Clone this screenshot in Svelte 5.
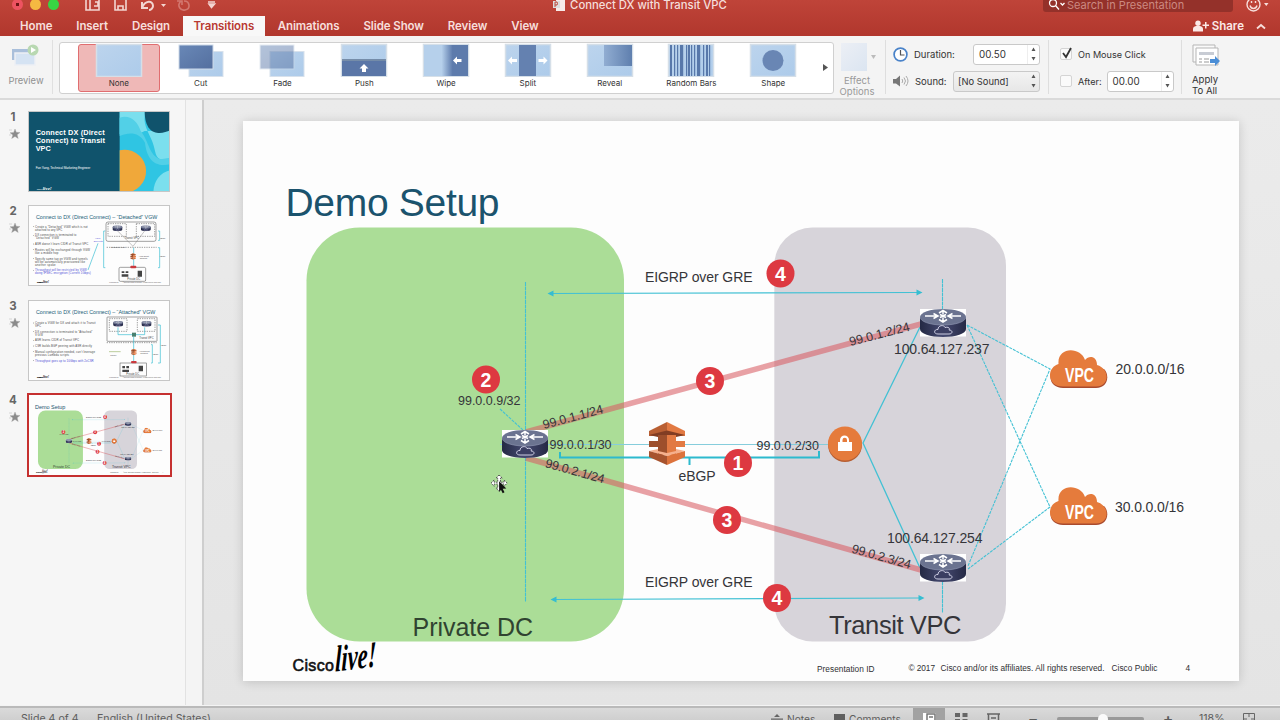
<script lang="ts">
  type Effect = { name: string; kind: string };

  const tabs = ["Home", "Insert", "Design", "Transitions", "Animations", "Slide Show", "Review", "View"];

  const effects: Effect[] = [
    { name: "None", kind: "none" },
    { name: "Cut", kind: "cut" },
    { name: "Fade", kind: "fade" },
    { name: "Push", kind: "push" },
    { name: "Wipe", kind: "wipe" },
    { name: "Split", kind: "split" },
    { name: "Reveal", kind: "reveal" },
    { name: "Random Bars", kind: "bars" },
    { name: "Shape", kind: "shape" },
  ];

  const bars = [2, 6, 9, 12, 14, 18, 20, 23, 26, 29, 31, 35, 38, 41];

  const routers = [
    { x: 502, y: 430 },
    { x: 920, y: 309 },
    { x: 920, y: 554 },
  ];

  const badges = [
    { n: 4, x: 780.5, y: 273.5 },
    { n: 3, x: 710, y: 381 },
    { n: 2, x: 486, y: 379.5 },
    { n: 1, x: 738, y: 463 },
    { n: 3, x: 727, y: 520 },
    { n: 4, x: 777, y: 598 },
  ];

  const detached = [
    { y: 68, text: "Create a “Detached” VGW which is not", w: 158 },
    { y: 77, text: "attached to any VPC", w: 82 },
    { y: 94, text: "DX connection is terminated to", w: 124 },
    { y: 103, text: "“Detached” VGW", w: 72 },
    { y: 120, text: "ASR doesn’t learn CIDR of Transit VPC", w: 160 },
    { y: 137, text: "Routes will be exchanged through VGW", w: 165 },
    { y: 146, text: "like a middle hop", w: 70 },
    { y: 164, text: "Specify same tag on VGW and tunnels", w: 158 },
    { y: 173, text: "will be automatically provisioned like", w: 150 },
    { y: 182, text: "another spoke", w: 62 },
    { y: 199, text: "Throughput will be restricted by VGW", w: 155, blue: true },
    { y: 208, text: "doing IPSEC encryption (Current 1Gbps)", w: 167, blue: true },
  ];

  const attached = [
    { y: 72, text: "Create a VGW for DX and attach it to Transit", w: 182 },
    { y: 81, text: "VPC", w: 18 },
    { y: 98, text: "DX connection is terminated to “Attached”", w: 172 },
    { y: 107, text: "VGW", w: 24 },
    { y: 124, text: "ASR learns CIDR of Transit VPC", w: 132 },
    { y: 141, text: "CSR builds BGP peering with ASR directly", w: 171 },
    { y: 158, text: "Manual configuration needed, can’t leverage", w: 180 },
    { y: 167, text: "previous Lambda scripts", w: 102 },
    { y: 185, text: "Throughput goes up to 10Gbps with 2xCSR", w: 176, blue: true },
  ];
</script>

{#snippet stepper()}
  <span class="stepper">
    <svg width="7" height="16" viewBox="0 0 7 16" fill="#555"><path d="M1.500 5 3.500 1.500 5.500 5zM1.500 11h4l-2 3.500z" /></svg>
  </span>
{/snippet}

{#snippet setupSlide()}
  <svg class="slide-art" viewBox="243 121 996 560" font-family="'Liberation Sans', Arial, sans-serif" fill="#353539">
    <rect x="243" y="121" width="996" height="560" fill="#fdfdfd" />
    <text x="285.500" y="215.500" font-size="39" textLength="214" fill="#1b536d">Demo Setup</text>
    <rect x="306.500" y="227.500" width="317.500" height="414" rx="53" fill="#abdd97" />
    <rect x="774.300" y="227.500" width="231.700" height="414" rx="38" fill="#d7d4da" />

    <g fill="none" stroke="#43c1d4" stroke-width="1.100">
      <path d="M525.500 282v320M942.500 279v31M942.500 581v32" stroke-dasharray="4 .5" />
      <path d="M500 409 524 431" stroke-dasharray="3 1" />
      <path d="M552 293.500 917 292.500M555 599.500 919 598" />
      <path d="M500 444.500H830" stroke="#86cddc" />
      <path d="M920 327 863 443 920 568" stroke-width="1.300" />
      <path d="M967 325 1050 369 968 566M967 325 1050 507 968 569" stroke-dasharray="3 1" />
      <path d="M560 452v5.500H819V451M689.500 457.500V465" stroke="#2dbace" stroke-width="2" />
    </g>
    <g fill="#35bdd1">
      <path d="M547.500 293.500l6-3v6zM922.500 292.500l-6-3v6zM550.500 599.500l6-3v6zM924.500 598l-6-3v6z" />
    </g>
    <g stroke="#d95c63" stroke-opacity=".57" stroke-width="5.500">
      <path d="M526 432 921 324M526 458 921 570" fill="none" />
    </g>

    <use href="#direct-connect" x="648" y="422" width="38" height="43" />
    {#each routers as r}
      <use href="#router" x={r.x} y={r.y} width="46" height="28" />
    {/each}
    <use href="#vpc-cloud" x="1050" y="350" width="59" height="38" />
    <use href="#vpc-cloud" x="1050" y="487" width="59" height="38" />

    <circle cx="845" cy="445" r="17" fill="#b65e32" />
    <circle cx="845" cy="443.500" r="17" fill="#e57b3c" />
    <path d="M838 442h14v9h-14zM840 443v-3a4.500 4.500 0 0 1 9 0v3" fill="#fff" />
    <path d="M842.500 442v-2a2 2 0 0 1 4.500 0v2z" fill="#e57b3c" />

    <g font-size="14">
      <text x="645" y="281.500" textLength="107.500">EIGRP over GRE</text>
      <text x="645" y="587" textLength="107.500">EIGRP over GRE</text>
      <text x="894" y="353.500" textLength="95.500">100.64.127.237</text>
      <text x="887" y="543" textLength="95.500">100.64.127.254</text>
      <text x="1115.500" y="374" textLength="69">20.0.0.0/16</text>
      <text x="1115" y="512" textLength="69">30.0.0.0/16</text>
      <text x="678.500" y="480.500" textLength="37">eBGP</text>
    </g>
    <g font-size="12.500">
      <text x="458" y="404.500" textLength="62.500">99.0.0.9/32</text>
      <text x="549.500" y="449" textLength="62">99.0.0.1/30</text>
      <text x="756.500" y="449.500" textLength="62.500">99.0.0.2/30</text>
      <text transform="translate(544 429) rotate(-15)" textLength="62">99.0.1.1/24</text>
      <text transform="translate(544.500 467) rotate(15.500)" textLength="61">99.0.2.1/24</text>
      <text transform="translate(850.500 346) rotate(-14.500)" textLength="62">99.0.1.2/24</text>
      <text transform="translate(851 552.500) rotate(15.500)" textLength="61">99.0.2.3/24</text>
    </g>

    {#each badges as b}
      <circle cx={b.x} cy={b.y} r="14" fill="#dd3941" />
      <text x={b.x} y={b.y + 7} text-anchor="middle" font-size="19.500" font-weight="bold" fill="#fff">{b.n}</text>
    {/each}

    <text x="412.500" y="635.500" font-size="25" textLength="120.500" fill="#304331">Private DC</text>
    <text x="829" y="633.500" font-size="25.500" textLength="132.500">Transit VPC</text>

    <text class="cisco" x="292.500" y="671" font-size="16" textLength="41.500">Cisco</text>
    <text class="live" transform="translate(335 671.500) rotate(-7) skewX(-8) scale(.74 1.050)" font-size="35" textLength="56" lengthAdjust="spacingAndGlyphs">live!</text>
    <g font-size="8.300" fill="#303033">
      <text x="817" y="672" textLength="57.500">Presentation ID</text>
      <text x="908.500" y="671" textLength="26.500">© 2017</text>
      <text x="940.500" y="671" textLength="164">Cisco and/or its affiliates. All rights reserved.</text>
      <text x="1111.500" y="671" textLength="46">Cisco Public</text>
      <text x="1185.500" y="671">4</text>
    </g>
  </svg>
{/snippet}

{#snippet bullets(lines: { y: number; text: string; w: number; blue?: boolean }[])}
  <g font-size="8.500">
    {#each lines as line, i}
      {#if i === 0 || line.y - lines[i - 1].y > 12}
        <circle cx="17" cy={line.y - 3} r="1.200" />
      {/if}
      <text x="21" y={line.y} textLength={line.w} fill={line.blue ? "#4a4ad4" : "#4a4a4a"}>{line.text}</text>
    {/each}
  </g>
{/snippet}

{#snippet thumbFooter()}
  <text x="27" y="234" class="cisco" font-size="7">Cisco</text>
  <text x="45" y="234" class="live" font-size="15" textLength="18" lengthAdjust="spacingAndGlyphs">live!</text>
  <text x="244" y="233" font-size="4">Presentation ID</text>
  <text x="284" y="233" font-size="4">© 2017 Cisco and/or its affiliates. All rights reserved. Cisco Public</text>
{/snippet}

<svg width="0" height="0" class="defs" aria-hidden="true">
  <defs>
    <linearGradient id="router-side">
      <stop offset="0" stop-color="#242944" />
      <stop offset=".5" stop-color="#464a71" />
      <stop offset="1" stop-color="#252945" />
    </linearGradient>
    <linearGradient id="frame-blue" x2="1" y2="1">
      <stop offset="0" stop-color="#bcd4ed" />
      <stop offset="1" stop-color="#adcbea" />
    </linearGradient>
    <linearGradient id="frame-dark" x2="1" y2="1">
      <stop offset="0" stop-color="#6988b7" />
      <stop offset="1" stop-color="#546f9f" />
    </linearGradient>
    <linearGradient id="wipe-fill">
      <stop offset=".4" stop-color="#b6d0eb" />
      <stop offset=".65" stop-color="#5d7bac" />
    </linearGradient>
    <linearGradient id="reveal-fill">
      <stop offset="0" stop-color="#91add2" />
      <stop offset="1" stop-color="#5f7fae" />
    </linearGradient>
    <symbol id="router" viewBox="0 0 46 28">
      <path fill="#fff" d="M0 0h46v27.500H0z" />
      <path fill="url(#router-side)" d="M0 8v12c0 4.500 10 8 23 8s23-3.500 23-8V8z" />
      <ellipse cx="23" cy="8" rx="23" ry="8" fill="#6b7390" />
      <path d="M0 8c0 4.500 10 8 23 8s23-3.500 23-8" fill="none" stroke="#8a90ac" stroke-width=".7" />
      <g fill="none" stroke="#fff" stroke-width="1.500">
        <path d="M5 7h12M13.500 4.500 18 7l-4.500 2.500M41 7H29M32.500 4.500 28 7l4.500 2.500M23 5.500V2M19 4l4-2.500L27 4M23 8.500V12M19 10.500l4 2.500 4-2.500M20 5.500l6 3M26 5.500l-6 3" />
      </g>
      <path d="M18 25c-5 0-4-5 0-4.500 0-4.500 6-5 7-2 4-1 5 1 4 2.500 4 0 4 4 0 4z" fill="#3b3e62" stroke="#dcdcef" stroke-width=".9" />
    </symbol>
    <symbol id="direct-connect" viewBox="0 0 38 43">
      <path fill="#b95f33" d="M1 9 19 0v14L1 14z" />
      <path fill="#e27a43" d="m37 9-18-9v14h18z" />
      <path fill="#813d23" d="M1 13 19 8.500 37 13l-9 2H10z" />
      <path fill="#9d4f2c" d="M10 13h9v20h-9v-8H1v-6h9z" />
      <path fill="#e27a43" d="M28 13h-9v20h9v-8h9v-6h-9z" />
      <path fill="#f6b08d" d="m1 29 18-4 18 4-18 5z" />
      <path fill="#9d4f2c" d="M10 24h9v7l-9-2z" />
      <path fill="#e27a43" d="M28 24h-9v7l9-2z" />
      <path fill="#a7532e" d="m1 29 18 5v9L1 35z" />
      <path fill="#dd733c" d="m37 29-18 5v9l18-8z" />
    </symbol>
    <symbol id="vpc-cloud" viewBox="0 0 59 38">
      <path fill="#a94b2e" d="M13 38h33c12 0 14-13 8-19H5c-8 6-5 19 8 19z" />
      <path fill="#e57b3c" d="M13 36.500h33c14 0 14-18 1-21.500C47 6 39 5 35 10 31-3.500 7-4 8.500 14-4 18-3 36.500 13 36.500z" />
      <text x="15" y="31.500" font-family="'Liberation Sans', Arial, sans-serif" font-size="20" font-weight="bold" fill="#fff" textLength="29" lengthAdjust="spacingAndGlyphs">VPC</text>
    </symbol>
  </defs>
</svg>

<div class="window">
  <header>
    <div class="titlebar">
      <div class="title-left">
        <i class="light close"></i><i class="light minimize"></i><i class="light expand"></i>
        <svg class="quick" width="132" height="18" viewBox="84 -5 132 18" fill="none" stroke="#f3d5d1" stroke-width="1.600">
          <path d="M85 -3H98V9H85zM89 -3V9M94 1h3v4h-4M114 -3h9l2 2V9h-11zM117 9V5h5v4" />
          <path d="M141 1v6h6M141 7c3-8 11-8 11-2 0 2-2 4-4 4" stroke-width="2" />
          <path d="M160 3h5l-2.500 3z" fill="#f3d5d1" stroke="none" />
          <path d="M180 0c-5 5 0 10 4 9 6-1 5-9-1-9M181 4v-4h-5" stroke="#d3776f" />
          <path d="M207 1h7M208 3h5.500l-3 3.500z" fill="#f3d5d1" />
        </svg>
      </div>
      <div class="title">
        <svg width="13" height="14" viewBox="0 0 13 14"><path fill="#f8ebe9" d="M3 1h9v12H3z" /><path fill="#ddd" d="M0 3h7v7H0z" /><path d="M2 9V4h2q1 1.500 0 3H2" fill="none" stroke="#bc463b" /></svg>
        <span>Connect DX with Transit VPC</span>
      </div>
      <div class="title-right">
        <div class="search">
          <svg width="18" height="12" viewBox="0 0 18 12" fill="none" stroke="#fff" stroke-width="1.300"><circle cx="5" cy="4" r="3.500" /><path d="m7.500 6.500 3.500 4M12.500 4l2 2 2-2" /></svg>
          <span>Search in Presentation</span>
        </div>
        <svg width="23" height="16" viewBox="0 0 23 16" fill="none" stroke="#f7dedb" stroke-width="1.400"><circle cx="7.500" cy="7.500" r="6.500" /><path d="M4 8.500c1 4 6 4 7 0M5.500 4v2M9.500 4v2" /><path d="M18 6h4.500l-2.200 3z" fill="#f7dedb" stroke="none" /></svg>
      </div>
    </div>
    <nav>
      {#each tabs as tab}
        <button type="button" class:active={tab === "Transitions"}>{tab}</button>
      {/each}
      <div class="share">
        <svg width="16" height="12" viewBox="0 0 16 12" fill="#fbe9e7"><circle cx="5" cy="3.200" r="2.700" /><path d="M0 11.500V9q0-2.500 3-3h4q3 .5 3 3v2.500zM12 2h1.500v2.500H16V6h-2.500v2.500H12V6H9.500V4.500H12z" /></svg>
        <strong>Share</strong>
        <svg width="10" height="7" viewBox="0 0 10 7" fill="none" stroke="#f7dedb" stroke-width="1.800"><path d="m1 5.500 4-3.500 4 3.500" /></svg>
      </div>
    </nav>
  </header>

  <section class="ribbon">
    <div class="preview">
      <svg width="30" height="26" viewBox="0 0 30 26"><path fill="#a9bfdb" d="M1 6h17v11H1z" /><path fill="#d5e3f3" stroke="#edf0f5" stroke-width="1.500" d="M4 10h20v12H4z" /><circle cx="22" cy="7" r="5.500" fill="#b8d8b1" /><path fill="#fff" d="m20 4 5 3-5 3z" /></svg>
      <span>Preview</span>
    </div>

    <div class="gallery">
      {#each effects as effect}
        <div class="effect" class:selected={effect.kind === "none"}>
          <svg width="48" height="34" viewBox="-1 -1 48 34">
            {#if effect.kind === "cut" || effect.kind === "fade"}
              <rect x="11" y="7.500" width="34" height="25" fill="url(#frame-blue)" stroke="#d7e1ec" />
              <rect x="1" y="1" width="34" height="24" fill="url(#frame-dark)" stroke="#cdd9e8" opacity={effect.kind === "fade" ? 0.5 : 1} />
            {:else}
              <rect x=".5" y=".5" width="45" height="32" fill="url(#frame-blue)" stroke="#d5dfe8" stroke-width="1.500" />
            {/if}
            {#if effect.kind === "push"}
              <path d="M1 17h44v15H1z" fill="#5a76a7" /><path d="M1 16h44" stroke="#354866" />
              <path d="m23 20 4.500 4.500H25V28h-4v-3.500h-2.500z" fill="#fff" />
            {:else if effect.kind === "wipe"}
              <path d="M1 1h44v31H1z" fill="url(#wipe-fill)" />
              <path d="m30 16.500 4-4V15h4.500v3H34v2.500z" fill="#fff" />
            {:else if effect.kind === "split"}
              <path d="M14 1h17v31H14z" fill="#6481b0" />
              <path d="m3 16.500 4-4V15h5v3H7v2.500zM42.500 16.500l-4-4V15h-5v3h5v2.500z" fill="#fff" />
            {:else if effect.kind === "reveal"}
              <path d="M17 1h28v21H17z" fill="url(#reveal-fill)" />
            {:else if effect.kind === "bars"}
              {#each bars as x, i}
                <rect {x} y="1" width={i % 3 === 0 ? 2 : 1.2} height="31" fill="#5878aa" />
              {/each}
            {:else if effect.kind === "shape"}
              <circle cx="23" cy="16.500" r="10.500" fill="#6986b4" />
            {/if}
          </svg>
          <span>{effect.name}</span>
        </div>
      {/each}
      <svg class="more" width="7" height="9" viewBox="0 0 7 9"><path d="M1 1v7l5-3.500z" fill="#555" /></svg>
    </div>

    <div class="effect-options">
      <div><i></i><svg width="6" height="4"><path d="M0 0h5L2.500 4z" fill="#bbb" /></svg></div>
      <span>Effect<br />Options</span>
    </div>

    <div class="group timing">
      <div class="row">
        <svg width="15" height="15" viewBox="0 0 15 15" fill="none" stroke="#4a83c9" stroke-width="1.700"><circle cx="7.500" cy="7.500" r="6.400" fill="#fff" /><path d="M7.500 3v5h4" stroke="#555" stroke-width="1.200" /></svg>
        <span class="duration-label">Duration:</span>
        <div class="field duration">00.50{@render stepper()}</div>
      </div>
      <div class="row">
        <svg width="16" height="12" viewBox="0 0 16 12"><path d="M0 4h3l4-3.500v11L3 8.500H0z" fill="#777" /><path d="M9 4q1.500 2 0 4M11 2.500q3 3.500 0 7M13 1q4 5 0 10" fill="none" stroke="#aaa" /></svg>
        <span class="sound-label">Sound:</span>
        <div class="field sound">[No Sound]{@render stepper()}</div>
      </div>
    </div>

    <div class="group advance">
      <div class="row">
        <i class="box"><svg width="13" height="14" viewBox="0 0 13 14"><path d="m3 7 3 4 5-9" fill="none" stroke="#333" stroke-width="1.800" /></svg></i>
        <span>On Mouse Click</span>
      </div>
      <div class="row">
        <i class="box"></i>
        <span>After:</span>
        <div class="field after">00.00{@render stepper()}</div>
      </div>
    </div>

    <div class="group apply">
      <svg width="28" height="23" viewBox="0 0 28 23"><path d="M1 1h22v17H1z" fill="#fafafa" stroke="#b5b5b5" /><path d="M4 4h22v17H4z" fill="#fff" stroke="#b5b5b5" /><path d="M7 8h15v3H7z" fill="#c8ccd4" /><path d="M7 15h3m2 0h5M7 18h3m2 0h5" stroke="#999" /><path d="M18 15h5v-3l5 5-5 5v-3h-5z" fill="#4b8ed6" /></svg>
      <span>Apply<br />To All</span>
    </div>
  </section>

  <main>
    <aside>
      {#each [1, 2, 3, 4] as n}
        <div class="thumb-row">
          <div class="marker">
            <b>{n}</b>
            <svg width="11" height="10" viewBox="0 0 11 10"><path d="m6 0 1.300 3.300L11 3.500 8.200 5.800 9.200 9.500 6 7.500 2.700 9.500 3.800 6 1 3.700l3.700-.3zM0 1h3M0 6h2" fill="#8b8b8b" stroke="#aaa" stroke-width=".4" /></svg>
          </div>
          <div class="thumb" class:current={n === 4}>
            {#if n === 1}
              <svg class="cover" viewBox="0 0 426 243" font-family="'Liberation Sans', Arial, sans-serif" fill="#fff">
                <path fill="#10536c" d="M0 0h426v243H0z" />
                <path fill="#2fc5e3" d="M275 0h151v243H275z" />
                <path fill="#7bdfee" d="M275 0h78c-14 50 20 70 28 120 8 40 35 20 45 30V60H350L330 70Q310 55 275 70z" />
                <path fill="#52d0e7" d="M275 20c30-10 53 10 63 40 25 30 25 75 60 85l28-5v20c-50 10-70-20-75-65-20-35-50-30-76-20z" />
                <path fill="#7bdfee" d="M426 178c-30 8-48 30-50 65h50z" />
                <path fill="#10536c" d="M350 0c0 80 53 70 76 58V0z" />
                <path fill="#f0a83a" d="M275 118a60 60 0 0 1 30 125h-30z" />
                <g font-size="22" font-weight="bold">
                  <text x="23" y="71" textLength="207">Connect DX (Direct</text>
                  <text x="23" y="95" textLength="208">Connect) to Transit</text>
                  <text x="23" y="120">VPC</text>
                </g>
                <text x="23" y="174" font-size="9.500" textLength="164">Fan Yang, Technical Marketing Engineer</text>
                <text x="26" y="236" class="cisco" font-size="7">Cisco</text>
                <text x="44" y="236" class="live" font-size="15">live!</text>
              </svg>
            {:else if n === 2}
              <svg viewBox="0 0 426 243" font-family="'Liberation Sans', Arial, sans-serif" fill="#444">
                <text x="24" y="43" font-size="16" textLength="364" fill="#226078">Connect to DX (Direct Connect) – “Detached” VGW</text>
                {@render bullets(detached)}
                <g fill="none" stroke="#444" stroke-width="1.500">
                  <rect x="234" y="51" width="150" height="58" rx="6" />
                  <path d="M240 56h55v38h-55zM325 56h55v38h-55zM236 127h150" stroke-dasharray="4 3" />
                  <path d="M266 75 315 124 352 75" stroke="#888" />
                  <rect x="273" y="187" width="80" height="42" rx="4" />
                </g>
                <g fill="none" stroke="#35bdd1" stroke-width="2"><path d="M232 78h-5v110h5M390 78h5v28h-5M390 128h5v60h-5M317 128v58M180 195 210 115" /></g>
                <use href="#router" x="253" y="61" width="31" height="18" />
                <use href="#router" x="338" y="61" width="31" height="18" />
                <rect x="307" y="182" width="18" height="8" rx="3" fill="#c93a3f" />
                <use href="#direct-connect" x="306" y="144" width="19" height="20" />
                <path d="M281 199h8v5h-8zM293 199h8v5h-8zM281 208h20v7h-20zM329 197h13v18h-13z" fill="#444" />
                <g font-size="6">
                  <text x="290" y="102" font-size="8">Transit VPC</text>
                  <text x="298" y="226" font-size="8">Private DC</text>
                  <text x="250" y="130">Detached VGW</text>
                  <text x="332" y="155">AWS Direct</text>
                  <text x="335" y="162">Connect</text>
                  <text x="396" y="103">eBGP</text>
                  <text x="396" y="157">eBGP</text>
                  <text x="201" y="103" font-size="7" fill="#5555d8">VGW</text>
                  <text x="197" y="112" font-size="7" fill="#5555d8">Encrypts</text>
                </g>
                {@render thumbFooter()}
              </svg>
            {:else if n === 3}
              <svg viewBox="0 0 426 243" font-family="'Liberation Sans', Arial, sans-serif" fill="#444">
                <text x="24" y="43" font-size="16" textLength="358" fill="#226078">Connect to DX (Direct Connect) – “Attached” VGW</text>
                {@render bullets(attached)}
                <g fill="none" stroke="#444" stroke-width="1.500">
                  <rect x="237" y="51" width="150" height="73" rx="2" />
                  <path d="M244 56h53v38h-53zM328 56h53v38h-53zM236 128h150" stroke-dasharray="4 3" />
                  <rect x="276" y="189" width="79" height="39" />
                </g>
                <g fill="none" stroke="#35bdd1" stroke-width="2"><path d="M270 82v22h80V82M390 75h7v114h-7M369 134h4v55h-4M317 110v74" /><path d="M243 155h35" stroke="#9ab56d" /></g>
                <use href="#router" x="255" y="62" width="31" height="18" />
                <use href="#router" x="340" y="62" width="31" height="18" />
                <rect x="309" y="183" width="17" height="7" rx="3" fill="#c93a3f" />
                <use href="#direct-connect" x="308" y="146" width="19" height="20" />
                <path d="M312 98h12v12h-12z" fill="#48806f" />
                <path d="M283 198h8v7h-8zM295 198h8v7h-8zM283 209h20v7h-20zM332 197h13v17h-13z" fill="#444" />
                <g font-size="6">
                  <text x="334" y="118" font-size="8">Transit VPC</text>
                  <text x="295" y="226" font-size="8">Private DC</text>
                  <text x="334" y="155">AWS Direct</text>
                  <text x="337" y="162">Connect</text>
                  <text x="399" y="137">eBGP</text>
                  <text x="375" y="165">eBGP</text>
                  <text x="247" y="167">Tunnel</text>
                </g>
                {@render thumbFooter()}
              </svg>
            {:else}
              {@render setupSlide()}
            {/if}
          </div>
        </div>
      {/each}
    </aside>
    <div class="splitter"></div>
    <div class="workspace">
      <div class="slide">
        {@render setupSlide()}
        <svg class="pointer" width="18" height="20" viewBox="0 0 20 22">
          <path d="m9 1 3.500 3.500h-2V9h4V6.500L18 10l-3.500 3.500V11h-4v4.500h2L9 19l-3.500-3.500h2V11h-4v2.500L0 10l3.500-3.500V9h4V4.500h-2z" fill="#fff" stroke="#444" stroke-width="1" stroke-dasharray="2 1" />
          <path d="m9 8 8 8-4 .3 2 4-2 1-2-4-2 2.500z" fill="#111" />
        </svg>
      </div>
    </div>
  </main>

  <footer>
    <div class="status">
      <span class="count">Slide 4 of 4</span>
      <span class="language">English (United States)</span>
      <div class="tools">
        <svg width="12" height="12" viewBox="0 0 12 12" fill="#666"><path d="m6 1 3 3H3zM0 5.500h12v1.300H0zM0 8.500h12v1.300H0z" /></svg>
        <span class="notes">Notes</span>
        <svg width="12" height="10"><path d="M0 0h11v9H0z" fill="#5f5f5f" /></svg>
        <span class="comments">Comments</span>
        <i class="view on"><svg width="13" height="12" viewBox="0 0 13 12"><path d="M0 0h13v12H0z" fill="#fff" /><path d="M4 1h8v8H4zM6 4h4" fill="none" stroke="#777" stroke-width="1.500" /></svg></i>
        <i class="view"><svg width="13" height="12" fill="#666"><path d="M0 0h5v4H0zM7.500 0h5v4h-5zM0 6h5v4H0zM7.500 6h5v4h-5z" /></svg></i>
        <i class="view"><svg width="13" height="12" fill="none" stroke="#666" stroke-width="1.500"><path d="M0 1h13M1.500 1v9h10V1M4 5h5" /></svg></i>
        <span class="sign">−</span>
        <div class="slider"><i></i></div>
        <span class="sign">+</span>
        <span class="percent">118%</span>
        <svg width="12" height="12" viewBox="0 0 12 12" fill="none" stroke="#666"><path d="M.5.500h11v11H.5zM6 1v3M6 8v3M1 6h3M8 6h3" /></svg>
      </div>
    </div>
  </footer>
</div>

<style>
  :global(body) {
    margin: 0;
    overflow: hidden;
  }

  .window {
    display: flex;
    flex-direction: column;
    width: 1280px;
    height: 720px;
    overflow: hidden;
    background: #f4f4f4;
    color: #333;
    font-family: Inter, "Liberation Sans", sans-serif;
    font-size: 11px;
  }

  .window svg {
    display: block;
    flex: none;
  }

  .defs {
    position: absolute;
  }

  header {
    height: 36px;
    background: linear-gradient(#bf4439, #b1372d);
  }

  .titlebar {
    display: grid;
    grid-template-columns: 1fr auto 1fr;
    align-items: center;
    height: 9px;
    color: #f5dedb;
  }

  .title-left,
  .title,
  .title-right {
    display: flex;
    align-items: center;
    height: 9px;
  }

  .title-left {
    gap: 7px;
    padding-left: 11.5px;
  }

  .light {
    width: 11px;
    height: 11px;
    border-radius: 50%;
    background: #f5b942;
  }

  .light.close {
    background: radial-gradient(circle, #701415 1.5px, #ee5361 2px);
  }

  .light.expand {
    background: #38d443;
  }

  .quick {
    margin-left: 19px;
  }

  .title {
    gap: 4px;
    font-size: 11.3px;
    font-weight: 500;
    white-space: nowrap;
  }

  .title-right {
    justify-content: flex-end;
    gap: 13px;
    padding-right: 11px;
  }

  .search {
    display: flex;
    align-items: center;
    gap: 1px;
    box-sizing: border-box;
    width: 190px;
    height: 15px;
    padding-left: 5px;
    border-radius: 3px;
    background: #94312a;
    color: #cc8981;
    font-size: 11px;
  }

  nav {
    display: flex;
    align-items: flex-end;
    height: 27px;
    padding-left: 8px;
  }

  nav button {
    height: 20px;
    padding: 0 12px;
    border: 0;
    background: transparent;
    color: #f7dfdc;
    font: 600 11.5px/20px Inter, sans-serif;
    letter-spacing: -0.1px;
  }

  nav button.active {
    margin: 0 1px;
    padding: 0 10.5px;
    background: #f8f8f8;
    color: #b83a32;
  }

  .share {
    display: flex;
    align-items: center;
    gap: 3px;
    height: 20px;
    margin-left: auto;
    padding-right: 14px;
    color: #fbe9e7;
    font-size: 11.5px;
  }

  .share strong {
    margin-right: 9px;
    font-weight: 600;
  }

  .ribbon {
    display: flex;
    box-sizing: border-box;
    height: 64px;
    border-bottom: 2px solid #dadada;
    background: #f4f4f4;
  }

  .preview {
    display: flex;
    flex-direction: column;
    align-items: center;
    gap: 6px;
    box-sizing: border-box;
    width: 53px;
    height: 54px;
    margin-top: 4px;
    padding-top: 3px;
    border-right: 1px solid #e0e0e0;
    color: #909090;
    font-size: 9.4px;
  }

  .gallery {
    display: flex;
    align-items: flex-start;
    box-sizing: border-box;
    width: 775px;
    height: 52px;
    margin: 6px 0 0 6px;
    padding-left: 18px;
    border: 1px solid #d0d0d0;
    border-radius: 3px;
    background: #fff;
  }

  .effect {
    display: flex;
    flex-direction: column;
    align-items: center;
    gap: 1px;
    box-sizing: border-box;
    width: 81.8px;
    height: 48px;
    margin-top: 0.5px;
    border: 1px solid transparent;
    border-radius: 3px;
    font-size: 8px;
    line-height: 11px;
  }

  .effect svg {
    margin-top: -2px;
  }

  .effect.selected {
    border-color: #e06e70;
    background: #efb8b7;
  }

  .more {
    margin: 20px 0 0 8px;
  }

  .effect-options {
    width: 46px;
    padding-top: 6px;
    color: #999;
    font-size: 9.5px;
    line-height: 11px;
    text-align: center;
  }

  .effect-options div {
    display: flex;
    align-items: center;
    gap: 4px;
    height: 30px;
    margin: 0 0 3px 7px;
  }

  .effect-options i {
    width: 26px;
    height: 28px;
    background: linear-gradient(135deg, #eceff5, #dbe5f1);
  }

  .group {
    box-sizing: border-box;
    height: 54px;
    margin-top: 4px;
    border-left: 1px solid #dedede;
    font-size: 9.5px;
  }

  .timing {
    width: 163px;
    margin-left: 5px;
    padding: 3px 0 0 7px;
  }

  .advance {
    width: 133px;
    padding: 3px 0 0 11px;
    font-size: 9.1px;
  }

  .row {
    display: flex;
    align-items: center;
    height: 22px;
    margin-bottom: 5px;
    white-space: nowrap;
  }

  .duration-label {
    width: 54px;
    margin-left: 6px;
  }

  .sound-label {
    width: 33px;
    margin-left: 6px;
  }

  .field {
    display: flex;
    align-items: center;
    box-sizing: border-box;
    width: 67px;
    height: 21px;
    padding-left: 5px;
    border: 1px solid #c9c9c9;
    border-radius: 3px;
    background: #fff;
    font-size: 9.8px;
  }

  .duration {
    margin-left: 5px;
  }

  .sound {
    width: 87px;
    margin-left: 5px;
    padding-left: 4px;
    background: linear-gradient(#f3f3f3, #e7e7e7);
    font-size: 9.4px;
  }

  .stepper {
    display: grid;
    place-items: center;
    width: 11px;
    height: 19px;
    margin-left: auto;
    border-left: 1px solid #eee;
  }

  .sound .stepper {
    border-color: transparent;
  }

  .box {
    box-sizing: border-box;
    width: 12px;
    height: 12px;
    margin-right: 6px;
    border: 1px solid #d4d4d4;
    border-radius: 2px;
    background: #fafafa;
  }

  .box svg {
    margin: -3px 0 0 -1px;
  }

  .after {
    margin-left: 5px;
  }

  .apply {
    padding: 4px 0 0 10px;
    font-size: 9.6px;
    line-height: 10.5px;
  }

  .apply svg {
    margin-bottom: 8px;
  }

  main {
    display: flex;
    flex: none;
    height: 606px;
    background: linear-gradient(#ebebeb, #e4e4e4);
  }

  aside {
    box-sizing: border-box;
    width: 186px;
    padding-top: 11px;
    border-right: 1px solid #e2e2e2;
    background: #f6f6f6;
  }

  .thumb-row {
    display: flex;
    height: 94.3px;
  }

  .marker {
    display: flex;
    flex-direction: column;
    align-items: center;
    gap: 6px;
    width: 28px;
    color: #666;
    font-size: 11.5px;
    line-height: 12px;
  }

  .marker b {
    margin-left: -2px;
  }

  .thumb {
    box-sizing: border-box;
    width: 142px;
    height: 81px;
    overflow: hidden;
    outline: 1px solid #c6c6c6;
    outline-offset: -1px;
    background: #fdfdfd;
  }

  .thumb svg {
    width: 100%;
    height: 100%;
  }

  .thumb.current {
    flex: none;
    width: 145px;
    height: 84px;
    margin: -1px 0 0 -1px;
    border: 2px solid #c5302f;
    outline: none;
  }

  .splitter {
    box-sizing: border-box;
    width: 18px;
    border-right: 2px solid #cecece;
    background: #f4f4f4;
  }

  .workspace {
    flex: 1;
    padding: 21px 0 0 39px;
  }

  .slide {
    position: relative;
    width: 996px;
    height: 560px;
    box-shadow: 0 1px 10px rgba(0, 0, 0, 0.16);
  }

  .slide-art {
    width: 100%;
    height: 100%;
  }

  .pointer {
    position: absolute;
    left: 248px;
    top: 353px;
  }

  .cisco {
    font-family: "Liberation Sans", Arial, sans-serif;
    stroke: #111;
    stroke-width: 0.6px;
    fill: #111;
  }

  .live {
    font-family: "Liberation Serif", serif;
    font-style: italic;
    font-weight: bold;
    fill: #000;
  }

  .cover .cisco,
  .cover .live {
    stroke: none;
    fill: #fff;
  }

  footer {
    flex: none;
    box-sizing: border-box;
    height: 14px;
    overflow: hidden;
    border-top: 2px solid #bababa;
    background: linear-gradient(#dadada, #cfcfcf);
    box-shadow: 0 -1px #f4f4f4;
  }

  .status {
    display: flex;
    align-items: center;
    height: 21px;
    padding-left: 21px;
    color: #5d5d5d;
    font-size: 10.6px;
  }

  .count {
    width: 76px;
  }

  .tools {
    display: flex;
    align-items: center;
    width: 509px;
    margin-left: auto;
  }

  .notes {
    width: 45px;
    margin-left: 4px;
    font-size: 10.2px;
  }

  .notes + svg {
    margin-left: 2px;
  }

  .comments {
    width: 64px;
    margin-left: 3px;
    font-size: 10.2px;
  }

  .view {
    display: grid;
    place-items: center;
    width: 32px;
    height: 21px;
  }

  .view.on {
    background: #a2a2a2;
  }

  .sign {
    width: 20px;
    margin-left: 14px;
    font-size: 15px;
    font-weight: 700;
    text-align: center;
  }

  .slider {
    width: 87px;
    height: 4px;
    margin-left: 14px;
    border-radius: 2px;
    background: #999;
  }

  .slider i {
    display: block;
    width: 10px;
    height: 10px;
    margin: -3px 0 0 41px;
    border-radius: 50%;
    background: #fafafa;
  }

  .percent {
    width: 44px;
    margin-left: 21px;
  }
</style>
